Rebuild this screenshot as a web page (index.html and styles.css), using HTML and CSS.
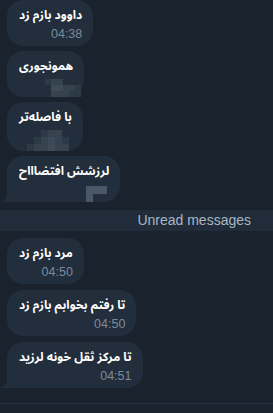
FILE: index.html
```html
<!DOCTYPE html>
<html lang="fa">
<head>
    <meta charset="UTF-8">
    <meta name="viewport" content="width=device-width, initial-scale=1.0">
    <title>Chat</title>
    <link rel="stylesheet" href="styles.css">
</head>
<body>

    <div class="chat">
        <div class="group first">
            <div class="bubble">
                <div class="text">داوود بازم زد</div>
                <div class="time">04:38</div>
            </div>
            <div class="bubble">
                <div class="text">همونجوری</div>
                <div class="blur blur-a">
                    <i class="c1"></i><i class="c2"></i><i class="c2"></i><i class="c0"></i><i class="c0"></i><i class="c0"></i>
                    <i class="c0"></i><i class="c3"></i><i class="c3"></i><i class="c2"></i><i class="c2"></i><i class="c1"></i>
                    <i class="c0"></i><i class="c2"></i><i class="c2"></i><i class="c2"></i><i class="c1"></i><i class="c1"></i>
                </div>
            </div>
            <div class="bubble">
                <div class="text">با فاصله‌تر</div>
                <div class="blur blur-b">
                    <i class="c0"></i><i class="c0"></i><i class="c1"></i><i class="c2"></i><i class="c2"></i><i class="c0"></i>
                    <i class="c0"></i><i class="c1"></i><i class="c2"></i><i class="c3"></i><i class="c2"></i><i class="c1"></i>
                    <i class="c1"></i><i class="c2"></i><i class="c2"></i><i class="c3"></i><i class="c2"></i><i class="c2"></i>
                </div>
            </div>
            <div class="bubble last">
                <div class="text">لرزشش افتضاااح</div>
                <div class="blur blur-c">
                    <i class="c4"></i><i class="c4"></i><i class="c4"></i>
                    <i class="c4"></i><i class="c0"></i><i class="c0"></i>
                </div>
                <svg class="tail" width="9" height="10" viewBox="0 0 9 10"><path d="M9 0 Q9 8 0 10 L9 10 Z" fill="#222e3c"/></svg>
            </div>
        </div>

        <div class="unread">Unread messages</div>

        <div class="group">
            <div class="bubble">
                <div class="text">مرد بازم زد</div>
                <div class="time">04:50</div>
            </div>
            <div class="bubble">
                <div class="text">تا رفتم بخوابم بازم زد</div>
                <div class="time">04:50</div>
            </div>
            <div class="bubble last">
                <div class="text">تا مرکز ثقل خونه لرزید</div>
                <div class="time">04:51</div>
                <svg class="tail" width="9" height="10" viewBox="0 0 9 10"><path d="M9 0 Q9 8 0 10 L9 10 Z" fill="#222e3c"/></svg>
            </div>
        </div>
    </div>

    <div class="footer"></div>

</body>
</html>
```

FILE: styles.css
```css
body {
    margin: 0;
    background: #19222d;
    font-family: 'Noto Sans Arabic', 'Noto Naskh Arabic', 'DejaVu Sans', sans-serif;
    height: 413px;
    overflow: hidden;
}
.chat {
    display: flex;
    flex-direction: column;
    height: 403px;
}
.group {
    display: flex;
    flex-direction: column;
    align-items: flex-start;
    gap: 6px;
    padding-left: 7px;
}
.group.first { gap: 5px; }
.bubble {
    position: relative;
    display: flex;
    flex-direction: column;
    align-items: flex-end;
    background: #222e3c;
    border-radius: 16px;
    padding: 6px 11px 4px 12px;
    color: #fff;
}
.bubble.last { border-bottom-left-radius: 0; }
.tail {
    position: absolute;
    left: -8px;
    bottom: 0;
}
.text {
    direction: rtl;
    font-size: 12px;
    font-weight: bold;
    line-height: 20px;
    white-space: nowrap;
}
.time {
    font-family: 'Liberation Sans', sans-serif;
    font-size: 12.5px;
    line-height: 16px;
    color: #7b8b9b;
}
.blur {
    display: grid;
    margin-top: 2px;
}
.blur i { display: block; }
.blur-a {
    grid-template-columns: repeat(6, 6px);
    grid-auto-rows: 6px;
    margin-right: -8px;
    margin-bottom: -4px;
}
.blur-b {
    grid-template-columns: repeat(6, 7px);
    grid-auto-rows: 7px;
    margin-right: 3px;
    margin-bottom: -4px;
}
.blur-c {
    grid-template-columns: repeat(3, 7px);
    grid-auto-rows: 8px;
    margin-top: 4px;
    margin-right: 2px;
    margin-bottom: -4px;
}
.c0 { background: #222e3c; }
.c1 { background: #2c3947; }
.c2 { background: #36434f; }
.c3 { background: #3d4a5a; }
.c4 { background: #4a5767; }
.unread {
    margin: 8px 0 7px;
    height: 21px;
    line-height: 21px;
    background: #202c3a;
    color: #a9b6c3;
    font-family: 'Liberation Sans', sans-serif;
    font-size: 14px;
    text-align: right;
    padding-right: 22px;
}
.footer {
    border-top: 1px solid #263241;
    height: 9px;
}
```
